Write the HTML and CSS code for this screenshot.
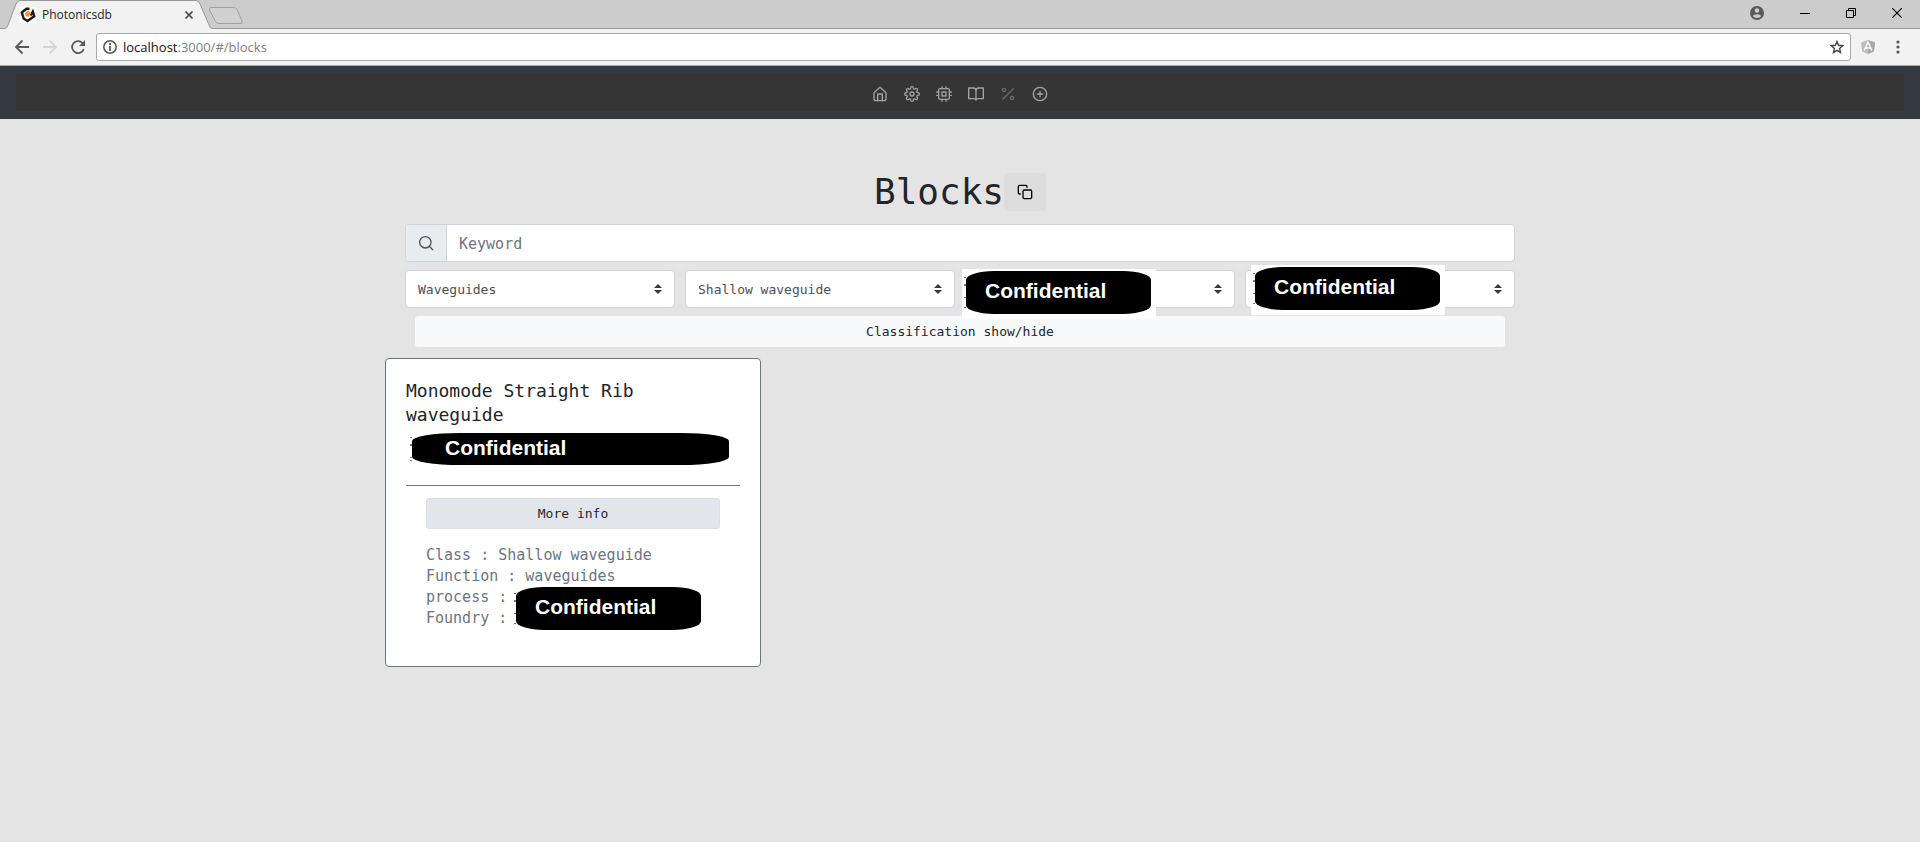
FILE: index.html
```html
<!DOCTYPE html>
<html lang="en">
<head>
<meta charset="utf-8">
<title>Photonicsdb</title>
<link rel="stylesheet" href="styles.css">
</head>
<body>
<div class="tabstrip">
  <svg class="tab-shape" width="260" height="29" viewBox="0 0 260 29" aria-hidden="true">
    <path d="M0 28.5H5Q7 28 8 25L16 4Q17.500 .5 20 .5H196Q198.500 .5 200 4L209 25Q210 28.500 212 28.500V29H0Z" fill="#f2f2f2"/>
    <path d="M0 28.500H5Q7 28 8 25L16 4Q17.500 .5 20 .5H196Q198.500 .5 200 4L209 25Q210 28.500 212 28.500H260" fill="none" stroke="#979797"/>
    <path d="M211 7.500H234Q236 7.500 237 9.500L242 21Q243 23.500 241 23.500H219Q216.500 23.500 215.500 21.500L209.500 10Q209 7.500 211 7.500Z" fill="#d0d0d0" stroke="#a0a0a0"/>
  </svg>
  <div class="tab">
    <svg class="favicon" width="16" height="16" viewBox="0 0 16 16" aria-hidden="true">
      <rect width="16" height="16" fill="#fff"/>
      <path d="M9.500 1.800L6.500 1.800L1.800 5.500L3.600 11.500L7.500 14L14.200 9.200L12.800 4.500L10.500 8.500" fill="none" stroke="#191919" stroke-width="2.400"/>
      <path d="M5 6L8.500 3.500L11 6.500L8.500 10L5.500 9Z" fill="#f39a1f"/>
    </svg>
    <span class="tab-title">Photonicsdb</span>
    <button class="icon-btn" aria-label="Close tab"><svg width="10" height="10" viewBox="0 0 10 10"><path d="M1.500 1.500l7 7M8.500 1.500l-7 7" stroke="#444" stroke-width="1.700"/></svg></button>
  </div>
  <div class="window-controls">
    <button class="icon-btn" aria-label="Profile"><svg width="14" height="14" viewBox="0 0 14 14"><circle cx="7" cy="7" r="7" fill="#5a5a5a"/><circle cx="7" cy="4.500" r="2.200" fill="#ccc"/><path d="M2.700 10Q4 8.200 7 8.200T11.300 10Q9.800 12 7 12T2.700 10" fill="#ccc"/></svg></button>
    <button class="icon-btn" aria-label="Minimize"><svg width="10" height="10" viewBox="0 0 10 10"><path d="M0 5.500h10" stroke="#000"/></svg></button>
    <button class="icon-btn" aria-label="Restore"><svg width="10" height="10" viewBox="0 0 10 10" fill="none" stroke="#000"><path d="M.5 2.500h7v7h-7zM2.500 2.500v-2h7v7h-2"/></svg></button>
    <button class="icon-btn" aria-label="Close window"><svg width="10" height="10" viewBox="0 0 10 10"><path d="M0 0l10 10M10 0L0 10" stroke="#000" stroke-width="1.200"/></svg></button>
  </div>
</div>
<div class="toolbar">
  <button class="icon-btn" aria-label="Back"><svg width="16" height="16" viewBox="0 0 16 16"><path d="M15 8H2.500M8.500 1.500L2 8l6.500 6.500" fill="none" stroke="#5a5a5a" stroke-width="1.800"/></svg></button>
  <button class="icon-btn" aria-label="Forward"><svg width="16" height="16" viewBox="0 0 16 16"><path d="M1 8h12.500M7.500 1.500L14 8l-6.500 6.500" fill="none" stroke="#d4d4d4" stroke-width="1.800"/></svg></button>
  <button class="icon-btn" aria-label="Reload"><svg width="16" height="16" viewBox="0 0 16 16"><path d="M13.800 10A6 6 0 1 1 12.500 4" fill="none" stroke="#5a5a5a" stroke-width="1.800"/><path d="M15 1v6H9z" fill="#5a5a5a"/></svg></button>
  <div class="address">
    <svg width="14" height="14" viewBox="0 0 14 14" aria-hidden="true"><circle cx="7" cy="7" r="6.200" fill="none" stroke="#555" stroke-width="1.500"/><path d="M7 3v2M7 6v5" stroke="#555" stroke-width="1.800"/></svg>
    <span class="url"><span class="host">localhost</span>:3000/#/blocks</span>
    <button class="icon-btn" aria-label="Bookmark"><svg width="14" height="14" viewBox="0 0 14 14"><path d="M7 1.500l1.600 3.800 4.100.4-3.100 2.700.9 4.100L7 10.300l-3.500 2.200.9-4.100L1.300 5.700l4.100-.4z" fill="none" stroke="#444" stroke-width="1.400"/></svg></button>
  </div>
  <div class="extensions">
    <button class="icon-btn" aria-label="Angular extension"><svg width="14" height="14" viewBox="0 0 14 14"><path d="M7 0l7 2.400-1.100 9L7 14l-5.900-2.600L0 2.400z" fill="#bdbdbd"/><path d="M7 0l7 2.400-1.100 9L7 14z" fill="#a9a9a9"/><path d="M3.200 10.500L7 2l3.800 8.500M4.600 8h4.800" fill="none" stroke="#fff" stroke-width="1.400"/></svg></button>
    <button class="icon-btn" aria-label="Menu"><svg width="4" height="14" viewBox="0 0 4 14" fill="#555"><circle cx="2" cy="2" r="1.600"/><circle cx="2" cy="7" r="1.600"/><circle cx="2" cy="12" r="1.600"/></svg></button>
  </div>
</div>
<header class="navbar">
  <nav class="nav-inner" aria-label="Main">
    <a href="#/" aria-label="Home"><svg class="feather" viewBox="0 0 24 24"><path d="M3 10L12 2l9 8v9a3 3 0 0 1-3 3H6a3 3 0 0 1-3-3z"/><path d="M8.500 22V12h7v10"/></svg></a>
    <a href="#/settings" aria-label="Settings"><svg class="feather" viewBox="0 0 24 24"><circle cx="12" cy="12" r="3"/><path d="M19.400 15a1.650 1.650 0 0 0 .33 1.820l.06.06a2 2 0 1 1-2.830 2.830l-.06-.06a1.650 1.650 0 0 0-2.800 1.180V21a2 2 0 0 1-4 0v-.09A1.650 1.650 0 0 0 7.200 19.700l-.06.06a2 2 0 1 1-2.830-2.830l.06-.06A1.650 1.650 0 0 0 3.190 14H3a2 2 0 0 1 0-4h.09A1.650 1.650 0 0 0 4.300 7.200l-.06-.06a2 2 0 1 1 2.830-2.830l.06.06A1.650 1.650 0 0 0 10 3.190V3a2 2 0 0 1 4 0v.09a1.650 1.650 0 0 0 2.800 1.210l.06-.06a2 2 0 1 1 2.830 2.830l-.06.06A1.650 1.650 0 0 0 20.810 10H21a2 2 0 0 1 0 4h-.09a1.650 1.650 0 0 0-1.510 1z"/></svg></a>
    <a href="#/blocks" aria-label="Blocks"><svg class="feather" viewBox="0 0 24 24"><rect x="4" y="4" width="16" height="16" rx="2"/><rect x="9" y="9" width="6" height="6"/><path d="M9 1v3M15 1v3M9 20v3M15 20v3M20 9h3M20 14h3M1 9h3M1 14h3"/></svg></a>
    <a href="#/library" aria-label="Library"><svg class="feather" viewBox="0 0 24 24"><path d="M1 3h7a4 4 0 0 1 4 4v14a3 3 0 0 0-3-2H1zM23 3h-7a4 4 0 0 0-4 4v14a3 3 0 0 1 3-2h8z"/></svg></a>
    <a class="dim" href="#/yield" aria-label="Percent"><svg class="feather" viewBox="0 0 24 24"><path d="M20 4L4 20"/><circle cx="6" cy="6" r="2.500"/><circle cx="18" cy="18" r="2.500"/></svg></a>
    <a href="#/add" aria-label="Add"><svg class="feather" viewBox="0 0 24 24"><circle cx="12" cy="12" r="10"/><path d="M12 8v8M8 12h8"/></svg></a>
  </nav>
</header>
<main class="container">
  <div class="heading">
    <h1>Blocks</h1>
    <button class="copy-btn" aria-label="Copy"><svg class="feather" viewBox="0 0 24 24"><rect x="9" y="9" width="13" height="13" rx="2"/><path d="M5 15H4a2 2 0 0 1-2-2V4a2 2 0 0 1 2-2h9a2 2 0 0 1 2 2v1"/></svg></button>
  </div>
  <form class="filters">
    <div class="search">
      <label for="keyword" aria-label="Keyword"><svg class="feather" viewBox="0 0 24 24"><circle cx="11" cy="11" r="8.500"/><path d="M22 22l-5-5"/></svg></label>
      <input id="keyword" type="text" placeholder="Keyword">
    </div>
    <div class="selects">
      <div class="field"><select aria-label="Function"><option>Waveguides</option></select><svg class="arrows" viewBox="0 0 8 10"><path d="M4 0L0 4h8zM4 10L0 6h8z"/></svg></div>
      <div class="field"><select aria-label="Class"><option>Shallow waveguide</option></select><svg class="arrows" viewBox="0 0 8 10"><path d="M4 0L0 4h8zM4 10L0 6h8z"/></svg></div>
      <div class="field"><select aria-label="Process"><option></option></select><svg class="arrows" viewBox="0 0 8 10"><path d="M4 0L0 4h8zM4 10L0 6h8z"/></svg><div class="mask mask-process"><span class="pill">Confidential</span></div></div>
      <div class="field"><select aria-label="Foundry"><option></option></select><svg class="arrows" viewBox="0 0 8 10"><path d="M4 0L0 4h8zM4 10L0 6h8z"/></svg><div class="mask mask-foundry"><span class="pill">Confidential</span></div></div>
    </div>
    <button class="btn toggle" type="button">Classification show/hide</button>
  </form>
  <article class="card">
    <h2>Monomode Straight Rib waveguide</h2>
    <div class="pill pill-wide">Confidential</div>
    <hr>
    <div class="card-body">
      <button class="btn more" type="button">More info</button>
      <div class="details">
        <div>Class : Shallow waveguide</div>
        <div>Function : waveguides</div>
        <div>process :</div>
        <div>Foundry :</div>
        <span class="pill pill-details">Confidential</span>
      </div>
    </div>
  </article>
</main>
</body>
</html>
```
FILE: styles.css
```css
* { box-sizing: border-box; }
body { margin: 0; min-height: 100vh; background: #e4e4e4; color: #212529; font: 15px/21px "DejaVu Sans Mono", monospace; }
button, input, select { font: inherit; color: inherit; }
svg { display: block; flex: none; }
.icon-btn { display: flex; padding: 0; border: 0; background: none; }

.tabstrip { position: relative; display: flex; justify-content: space-between; height: 29px; background: #ccc; border-bottom: 1px solid #979797; font: 12px/16px "Open Sans", sans-serif; color: #222; }
.tab-shape { position: absolute; left: 0; top: 0; }
.tab { position: relative; display: flex; align-items: center; gap: 6px; width: 194px; padding: 2px 0 0 20px; }
.tab-title { flex: 1; }
.window-controls { display: flex; align-items: center; gap: 36px; padding: 0 18px 2px 0; }

.toolbar { display: flex; align-items: center; gap: 12px; height: 37px; padding: 0 20px 0 14px; background: #f2f2f2; border-bottom: 1px solid #a9a9a9; }
.address { flex: 1; display: flex; align-items: center; gap: 6px; height: 28px; padding: 0 6px; margin: 0 -2px; background: #fff; border: 1px solid #a9a9a9; border-radius: 3px; font: 13px/18px "Open Sans", sans-serif; color: #808080; }
.extensions { display: flex; gap: 21px; }
.url { flex: 1; }
.host { color: #111; }

.navbar { padding: 8px 16px; background: #343a40; }
.nav-inner { display: flex; justify-content: center; align-items: center; gap: 16px; height: 37px; padding-top: 2px; background: #353535; }
.nav-inner a { color: #a3a3a3; }
.nav-inner a.dim { color: #6a6a6a; }
.feather { width: 16px; height: 16px; fill: none; stroke: currentColor; stroke-width: 2; stroke-linecap: round; stroke-linejoin: round; }

.container { width: 100%; max-width: 1140px; margin: 0 auto; padding: 49px 15px; }
.heading { display: flex; justify-content: center; align-items: center; height: 48px; }
h1 { margin: 0; font-size: 36px; line-height: 48px; font-weight: 400; }
.copy-btn { display: flex; padding: 11px 13px; border: 0; border-radius: 4px; background: #dcdcdc; color: #000; }

.filters { display: flex; flex-direction: column; gap: 8px; margin-top: 8px; }
.search { display: flex; height: 38px; border: 1px solid #ced4da; border-radius: 4px; background: #fff; overflow: hidden; }
.search label { display: flex; align-items: center; padding: 0 12px; background: #e9ecef; border-right: 1px solid #ced4da; color: #495057; }
.search input { flex: 1; padding: 2px 12px 0; border: 0; background: none; }
.search input::placeholder { color: #6c757d; opacity: 1; }
.selects { display: grid; grid-template-columns: repeat(4, 1fr); gap: 10px; }
.field { position: relative; }
.field select { display: block; width: 100%; height: 38px; padding: 0 28px 0 12px; appearance: none; border: 1px solid #ced4da; border-radius: 4px; background: #fff; color: #495057; font-size: 13px; }
.arrows { position: absolute; right: 13px; top: 14px; width: 8px; height: 10px; fill: #343a40; }
.mask { position: absolute; left: -3px; width: 194px; height: 50px; padding: 2px 5px 5px 4px; background: #fff; }
.mask-process { top: -1px; }
.mask-foundry { top: -5px; left: 6px; }
.pill { position: relative; display: block; width: 185px; height: 43px; padding-left: 19px; background: #000; color: #fff; border-radius: 28px / 9px; font: 700 21px/40px "Liberation Sans", sans-serif; }
.pill::before { content: ""; position: absolute; left: -2px; top: 14%; width: 2px; height: 72%; background: linear-gradient(#777 1px, transparent 1px 7px, #777 7px 9px, transparent 9px 20px, #777 20px 21px, transparent 21px calc(100% - 1px), #777 calc(100% - 1px)); }
.btn { height: 31px; padding: 0 8px; border: 1px solid #f8f9fa; border-radius: 3px; background: #f8f9fa; color: #212529; font-size: 13px; line-height: 21px; }
.toggle { margin: 0 10px; }

.card { width: 376px; min-height: 309px; margin: 11px 0 0 -20px; padding: 20px; border: 1px solid #6c757d; border-radius: 4px; background: #fff; }
h2 { margin: 0; font-size: 18px; line-height: 24px; font-weight: 400; }
.pill-wide { width: 317px; height: 32px; margin: 6px 0 0 6px; padding-left: 33px; border-radius: 48px / 8px; line-height: 30px; }
hr { margin: 20px 0 12px; border: 0; border-top: 1px solid #6c757d; }
.card-body { padding: 0 20px; }
.more { width: 100%; background: #e2e6ea; border-color: #dae0e5; }
.details { position: relative; margin-top: 16px; color: #6c757d; }
.pill-details { position: absolute; left: 90px; top: 42px; }
```
